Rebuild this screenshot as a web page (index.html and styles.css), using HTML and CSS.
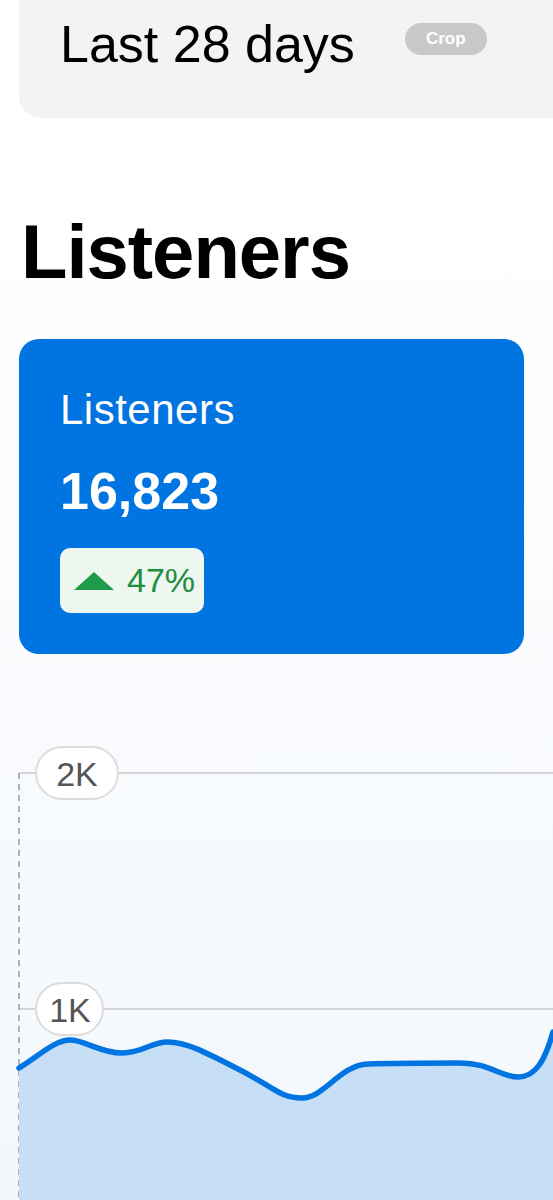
FILE: index.html
```html
<!DOCTYPE html>
<html lang="en">

<head>
    <meta charset="UTF-8">
    <meta name="viewport" content="width=device-width, initial-scale=1.0">
    <title>Listeners</title>
    <link rel="stylesheet" href="styles.css">
</head>

<body>
    <!-- RANGE -->
    <section class="Range">
        <span class="Range-label">Last 28 days</span>
        <span class="Range-crop">Crop</span>
    </section>

    <!-- TITLE -->
    <h1 class="Title">Listeners</h1>

    <!-- STAT CARD -->
    <section class="Stat">
        <p class="Stat-label">Listeners</p>
        <p class="Stat-value">16,823</p>
        <div class="Stat-badge">
            <span class="Stat-arrow"></span>
            <span class="Stat-change">47%</span>
        </div>
    </section>

    <!-- CHART -->
    <section class="Chart">
        <svg class="Chart-svg" viewBox="0 0 553 460" width="553" height="460">
            <line x1="19" y1="33" x2="553" y2="33" class="Chart-grid" />
            <line x1="19" y1="269" x2="553" y2="269" class="Chart-grid" />
            <line x1="19" y1="33" x2="19" y2="460" class="Chart-axis" />

            <path class="Chart-area"
                d="M19,328 C40,315 55,300 70,300 S100,313 122,313 S150,302 168,302 S205,312 240,330 S280,358 302,358 S340,325 368,324 S430,323 460,323 S500,337 518,337 S545,320 553,292 L553,460 L19,460 Z" />
            <path class="Chart-line"
                d="M19,328 C40,315 55,300 70,300 S100,313 122,313 S150,302 168,302 S205,312 240,330 S280,358 302,358 S340,325 368,324 S430,323 460,323 S500,337 518,337 S545,320 553,292" />

            <rect x="36" y="7" width="82" height="52" rx="26" class="Chart-pill" />
            <text x="77" y="46" class="Chart-tick">2K</text>
            <rect x="36" y="243" width="67" height="52" rx="26" class="Chart-pill" />
            <text x="70" y="282" class="Chart-tick">1K</text>
        </svg>
    </section>
</body>

</html>
```

FILE: styles.css
```css
/* VARIABLES GENERALES */
:root {
    --color-blue: #0074e0;
    --color-card: #f3f3f3;
    --color-green: #1e8e3e;
    --font-main: "Liberation Sans", Arial, sans-serif;
}

/* RESET */
* {
    margin: 0;
    padding: 0;
    box-sizing: border-box;
    font-family: var(--font-main);
}

body {
    min-height: 1200px;
    overflow: hidden;
    color: #000;
    background: linear-gradient(to bottom, #fff 160px, #f3f7fc 1200px);
}

/* RANGE */
.Range {
    margin-left: 19px;
    padding: 18px 0 0 41px;
    height: 118px;
    display: flex;
    align-items: flex-start;
    gap: 50px;
    background-color: var(--color-card);
    border-radius: 0 0 0 22px;
}

.Range-label {
    font-size: 52px;
    line-height: 52px;
}

.Range-crop {
    margin-top: 5px;
    padding: 0 21px;
    height: 32px;
    line-height: 32px;
    font-size: 17px;
    font-weight: bold;
    color: #fff;
    background-color: #c8c8c8;
    border-radius: 16px;
}

/* TITLE */
.Title {
    margin: 96px 0 0 21px;
    font-size: 76px;
    line-height: 76px;
    letter-spacing: -1px;
    font-weight: bold;
}

/* STAT CARD */
.Stat {
    margin: 49px 0 0 19px;
    width: 505px;
    height: 315px;
    padding: 50px 0 0 41px;
    background-color: var(--color-blue);
    border-radius: 20px;
    color: #fff;
}

.Stat-label {
    font-size: 42px;
    line-height: 42px;
    letter-spacing: 0.5px;
}

.Stat-value {
    margin-top: 34px;
    font-size: 52px;
    line-height: 52px;
    font-weight: bold;
}

.Stat-badge {
    margin-top: 31px;
    width: 144px;
    height: 65px;
    padding-left: 14px;
    display: flex;
    align-items: center;
    gap: 13px;
    background-color: #edf6ef;
    border-radius: 10px;
}

.Stat-arrow {
    width: 0;
    height: 0;
    border-left: 20px solid transparent;
    border-right: 20px solid transparent;
    border-bottom: 18px solid #1f9a48;
}

.Stat-change {
    font-size: 34px;
    color: var(--color-green);
}

/* CHART */
.Chart {
    margin-top: 86px;
}

.Chart-svg {
    display: block;
}

.Chart-grid {
    stroke: #c9c9cc;
    stroke-width: 1.5;
}

.Chart-axis {
    stroke: #9a9a9a;
    stroke-width: 1.5;
    stroke-dasharray: 6 5;
}

.Chart-area {
    fill: #c6def6;
}

.Chart-line {
    fill: none;
    stroke: var(--color-blue);
    stroke-width: 5.5;
    stroke-linecap: round;
}

.Chart-pill {
    fill: #fff;
    stroke: #dcdcdc;
    stroke-width: 2;
}

.Chart-tick {
    font-size: 34px;
    fill: #555;
    text-anchor: middle;
}
```
